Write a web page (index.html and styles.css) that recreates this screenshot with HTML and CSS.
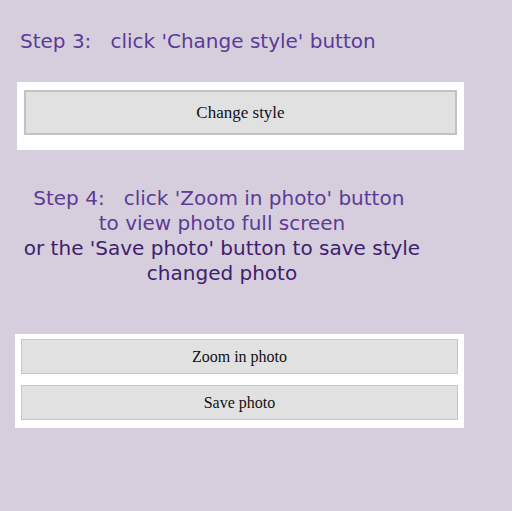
FILE: index.html
```html
<!DOCTYPE html>
<html>
<head>
<meta charset="utf-8">
<link rel="stylesheet" href="styles.css">
</head>
<body>
<div class="step step3">Step 3:&nbsp;&nbsp; click 'Change style' button</div>
<div class="panel panel-one">
  <button class="btn btn-big">Change style</button>
</div>
<div class="step step4">
  <span class="light">Step 4:&nbsp;&nbsp; click 'Zoom in photo' button&nbsp;<br>to view photo full screen</span><br>
  <span class="dark">or the 'Save photo' button to save style<br>changed photo</span>
</div>
<div class="panel panel-two">
  <button class="btn btn-small">Zoom in photo</button>
  <button class="btn btn-small">Save photo</button>
</div>
</body>
</html>
```
FILE: styles.css
```css
html, body {
  margin: 0;
  padding: 0;
  background: #d6cedc;
}
body {
  width: 512px;
  height: 511px;
  overflow: hidden;
}
.step {
  font-family: "DejaVu Sans", Verdana, sans-serif;
  font-size: 20px;
  line-height: 25px;
  color: #5b3b98;
}
.step3 {
  padding-top: 29px;
  padding-left: 20px;
}
.panel {
  background: #ffffff;
  display: flex;
  flex-direction: column;
}
.panel-one {
  margin-top: 28px;
  margin-left: 17px;
  width: 433px;
  padding: 8px 7px 15px 7px;
}
.step4 {
  margin-top: 36px;
  width: 444px;
  text-align: center;
}
.step4 .dark {
  color: #3e2070;
}
.panel-two {
  margin-top: 48px;
  margin-left: 15px;
  width: 437px;
  padding: 5px 6px 8px 6px;
  gap: 11px;
}
.btn {
  display: block;
  width: 100%;
  background: #e1e1e1;
  font-family: "Liberation Serif", "Times New Roman", serif;
  color: #111111;
  padding: 0;
  margin: 0;
}
.btn-big {
  height: 45px;
  border: 2px solid #c2c2c2;
  font-size: 17px;
}
.btn-small {
  height: 35px;
  border: 1px solid #c6c6c6;
  font-size: 16px;
}
```
